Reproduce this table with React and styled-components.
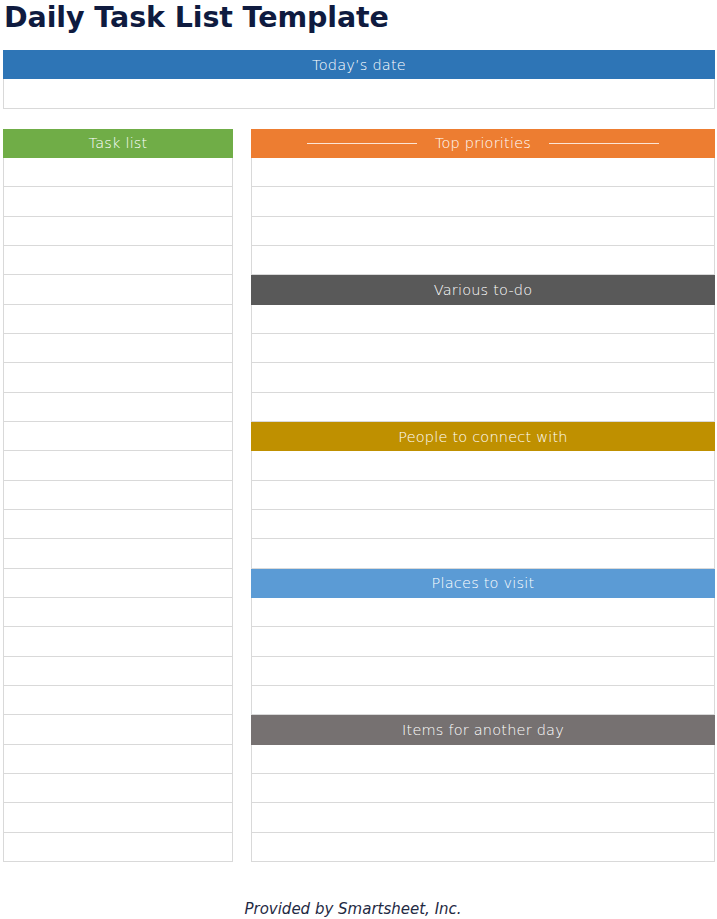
import React from 'react';
import styled, { createGlobalStyle } from 'styled-components';

const GlobalStyle = createGlobalStyle`
  html, body {
    margin: 0;
    padding: 0;
    background: #ffffff;
  }
  body {
    font-family: "DejaVu Sans", "Liberation Sans", sans-serif;
  }
`;

const ROW = 29.33;

const Page = styled.div`
  width: 717px;
  height: 919px;
  padding: 0 2px 0 3px;
  box-sizing: border-box;
  display: flex;
  flex-direction: column;
`;

const Title = styled.h1`
  margin: 0;
  padding-left: 1px;
  font-size: 28.5px;
  line-height: 36px;
  font-weight: bold;
  color: #0f1b3f;
  letter-spacing: -0.1px;
`;

const Block = styled.div`
  display: flex;
  flex-direction: column;
  margin-top: ${(p) => p.top || 0}px;
`;

const Header = styled.div`
  height: ${ROW}px;
  background: ${(p) => p.color};
  color: #ffffff;
  font-size: 14.5px;
  font-weight: 300;
  letter-spacing: 0.2px;
  display: flex;
  align-items: center;
  justify-content: center;
  gap: 18px;
  box-sizing: border-box;
  border: 1px solid ${(p) => p.color};
`;

const Rule = styled.span`
  width: 110px;
  height: 1px;
  background: rgba(255, 255, 255, 0.8);
`;

const Row = styled.div`
  height: ${ROW}px;
  box-sizing: border-box;
  border: 1px solid #d9d9d9;
  border-top: none;
  background: #ffffff;
`;

const Columns = styled.div`
  display: grid;
  grid-template-columns: 230px 1fr;
  gap: 18px;
  margin-top: 20px;
`;

const Footer = styled.div`
  margin-top: auto;
  padding: 0 12px 0 0;
  text-align: center;
  font-style: italic;
  font-size: 15px;
  line-height: 20px;
  color: #1f2a44;
`;

function Section({ title, color, rows, rules }) {
  return (
    <Block>
      <Header color={color}>
        {rules && <Rule />}
        <span>{title}</span>
        {rules && <Rule />}
      </Header>
      {Array.from({ length: rows }).map((_, i) => (
        <Row key={i} />
      ))}
    </Block>
  );
}

const rightSections = [
  { title: 'Top priorities', color: '#ed7d31', rules: true },
  { title: 'Various to-do', color: '#595959' },
  { title: 'People to connect with', color: '#bf9000' },
  { title: 'Places to visit', color: '#5b9bd5' },
  { title: 'Items for another day', color: '#767171' },
];

export default function App() {
  return (
    <>
      <GlobalStyle />
      <Page>
        <Title>Daily Task List Template</Title>
        <Block top={14}>
          <Header color="#2e75b6">Today’s date</Header>
          <Row />
        </Block>
        <Columns>
          <Section title="Task list" color="#70ad47" rows={24} />
          <div>
            {rightSections.map((s) => (
              <Section key={s.title} title={s.title} color={s.color} rows={4} rules={s.rules} />
            ))}
          </div>
        </Columns>
        <Footer>Provided by Smartsheet, Inc.</Footer>
      </Page>
    </>
  );
}
